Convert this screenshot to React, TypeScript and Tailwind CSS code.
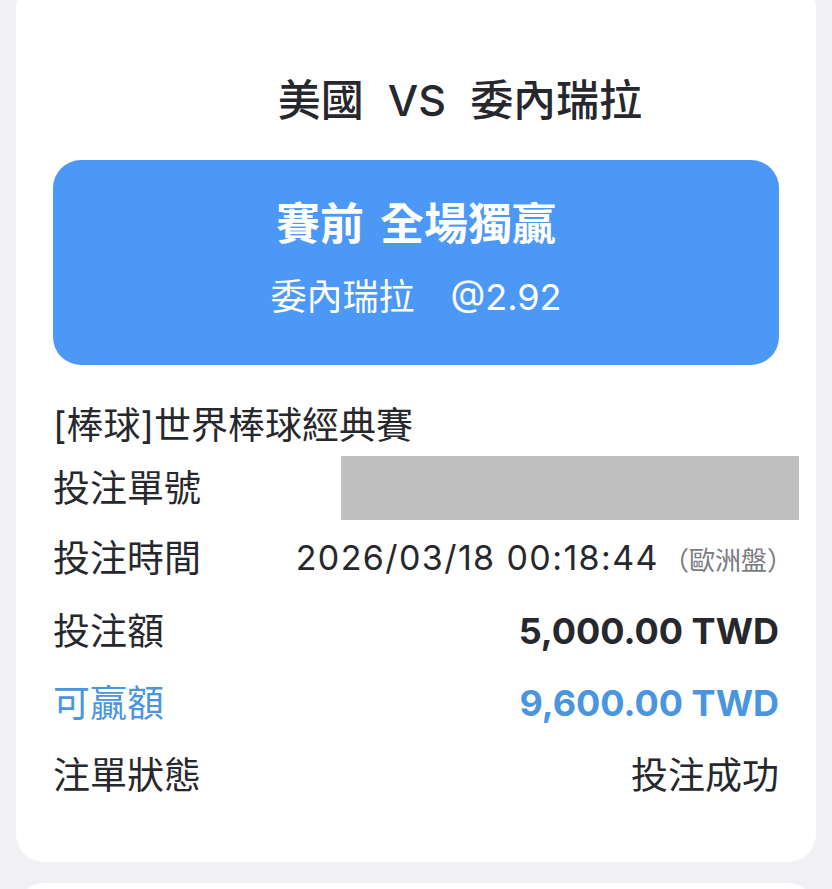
const font = { fontFamily: 'Inter, "Noto Sans CJK TC", "Noto Sans", sans-serif' };

function Row({ label, children, className = "", labelClass = "" }: { label: string; children?: React.ReactNode; className?: string; labelClass?: string }) {
  return (
    <div className={`flex items-center justify-between ${className}`}>
      <span className={`text-[37px] leading-none ${labelClass}`}>{label}</span>
      {children}
    </div>
  );
}

export default function App() {
  return (
    <div className="min-h-[889px] overflow-hidden bg-[#f0f0f5] text-[#27282d]" style={font}>
      <div className="mx-4 -mt-5 rounded-[28px] bg-white pt-[95px] pb-[51px]">
        <div className="flex h-[50px] items-center justify-center gap-[24px] pl-[88px] text-[43px] font-medium leading-none">
          <span>美國</span>
          <span>VS</span>
          <span>委內瑞拉</span>
        </div>

        <div className="mx-[37px] mt-[35px] flex h-[205px] flex-col items-center rounded-[28px] bg-[#4b98f7] pt-[40px] text-white">
          <div className="flex h-[48px] items-center gap-[16px] text-[44px] font-bold leading-none">
            <span>賽前</span>
            <span>全場獨贏</span>
          </div>
          <div className="mt-[27px] flex h-[44px] items-center gap-[36px] text-[36px] leading-none">
            <span>委內瑞拉</span>
            <span>@2.92</span>
          </div>
        </div>

        <div className="mt-[30px] px-[37px]">
          <Row label="[棒球]世界棒球經典賽" className="h-[60px]" />
          <Row label="投注單號" className="h-[66px]">
            <div className="-mr-5 h-[64px] w-[458px] bg-[#c0c0c0]" />
          </Row>
          <Row label="投注時間" className="h-[74px]">
            <span className="-mr-[14px] flex items-baseline gap-1">
              <span className="text-[34px] leading-none tracking-[1.4px]">2026/03/18 00:18:44</span>
              <span className="text-[26px] leading-none text-[#7a7b82]">（歐洲盤）</span>
            </span>
          </Row>
          <Row label="投注額" className="h-[72px]">
            <span className="text-[36px] font-bold leading-none">5,000.00 TWD</span>
          </Row>
          <Row label="可贏額" className="h-[72px]" labelClass="text-[#4a95e0]">
            <span className="text-[36px] font-bold leading-none text-[#4a95e0]">9,600.00 TWD</span>
          </Row>
          <Row label="注單狀態" className="h-[72px]">
            <span className="text-[37px] leading-none">投注成功</span>
          </Row>
        </div>
      </div>
      <div className="mx-4 mt-[21px] h-10 rounded-t-[28px] bg-white" />
    </div>
  );
}
